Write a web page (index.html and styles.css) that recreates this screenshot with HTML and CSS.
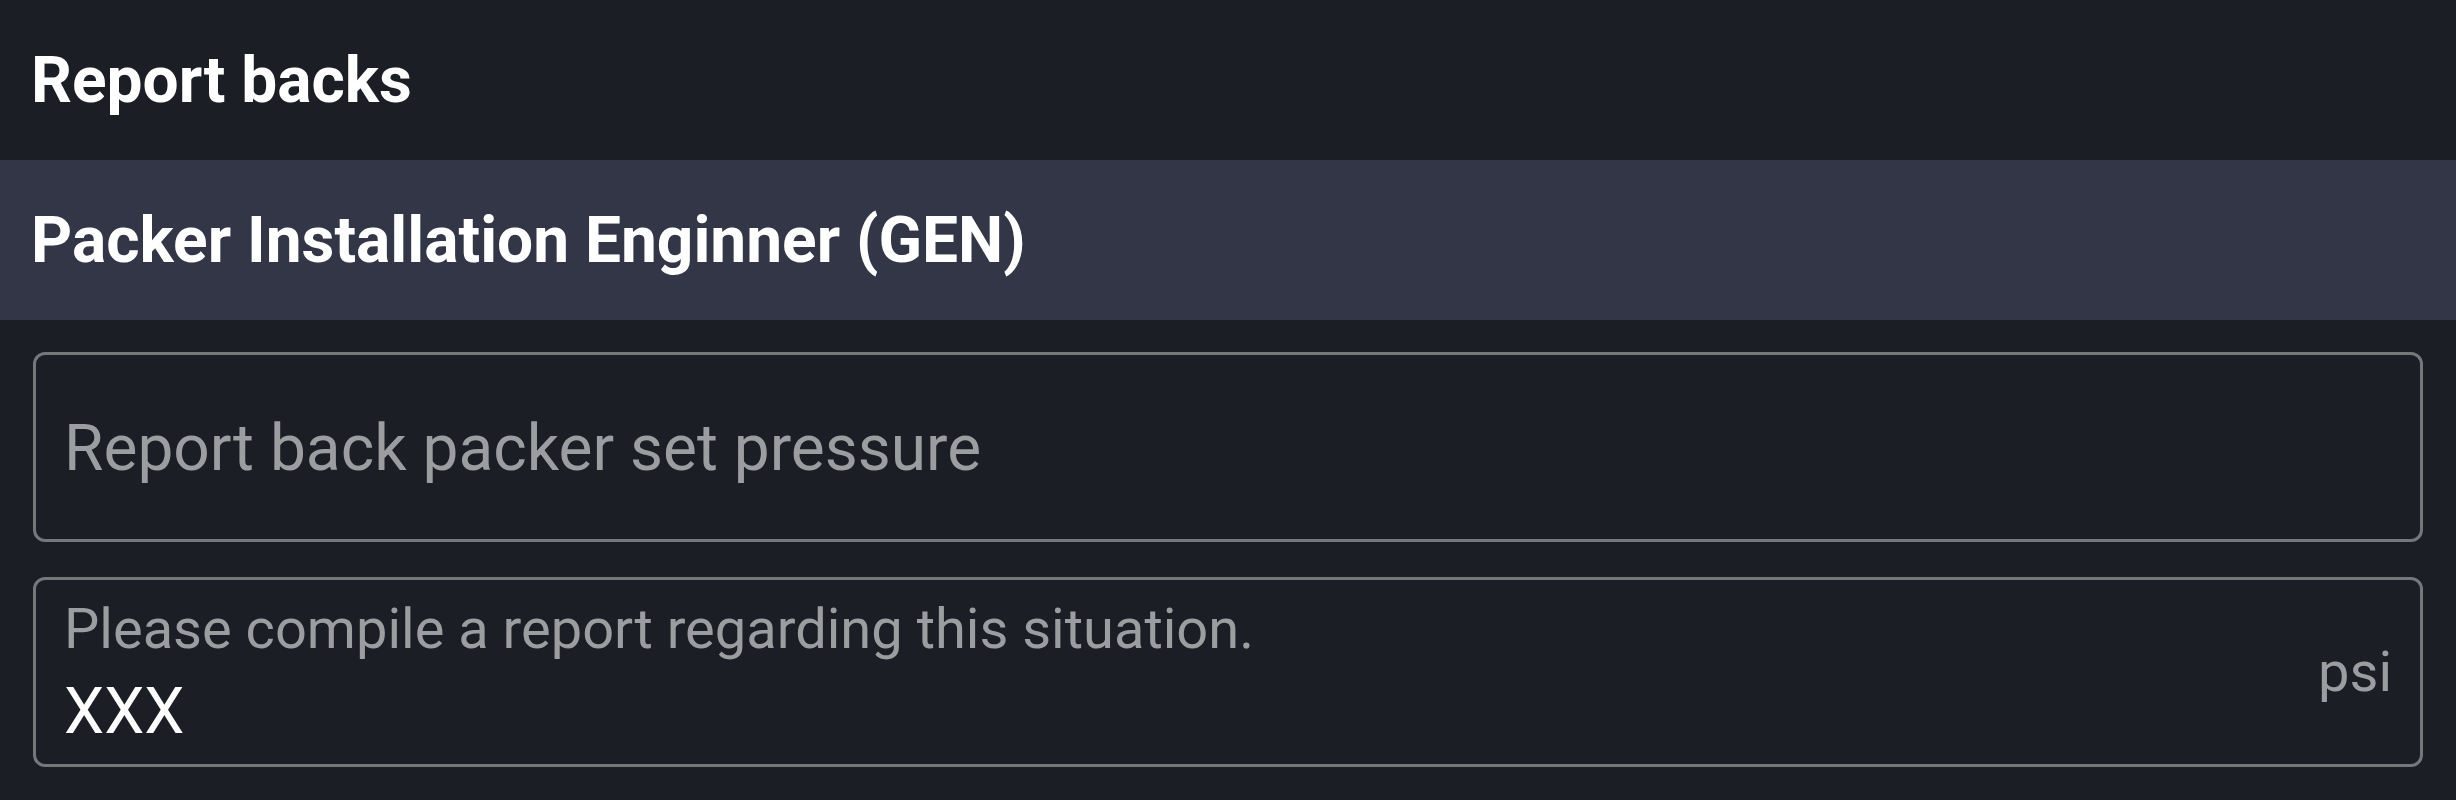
FILE: index.html
```html
<!DOCTYPE html>
<html lang="en">
<head>
<meta charset="utf-8">
<title>Report backs</title>
<link rel="stylesheet" href="styles.css">
</head>
<body>
  <div class="page">
    <header class="title-bar">
      <h1 class="title">Report backs</h1>
    </header>
    <section class="section">
      <div class="section-head">
        <h2 class="section-title">Packer Installation Enginner (GEN)</h2>
      </div>
      <div class="fields">
        <div class="field field-empty">
          <span class="placeholder">Report back packer set pressure</span>
        </div>
        <div class="field field-filled">
          <div class="field-main">
            <span class="field-label">Please compile a report regarding this situation.</span>
            <span class="field-value">XXX</span>
          </div>
          <span class="field-unit">psi</span>
        </div>
      </div>
    </section>
  </div>
</body>
</html>
```

FILE: styles.css
```css
* {
  box-sizing: border-box;
}

html, body {
  margin: 0;
  padding: 0;
  background: #1b1e25;
}

body {
  font-family: Roboto, "Noto Sans", "Liberation Sans", sans-serif;
  color: #ffffff;
  width: 2456px;
  height: 800px;
  overflow: hidden;
}

.page {
  display: flex;
  flex-direction: column;
}

.title-bar {
  height: 160px;
  display: flex;
  align-items: center;
  padding: 0 31px;
  background: #1b1e25;
}

.title,
.section-title {
  margin: 0;
  font-size: 64px;
  font-weight: 700;
  line-height: 75px;
  color: #ffffff;
}

.section-head {
  height: 160px;
  display: flex;
  align-items: center;
  padding: 0 31px;
  background: #323646;
}

.fields {
  display: flex;
  flex-direction: column;
  gap: 35px;
  padding: 32px 33px 0 33px;
}

.field {
  border: 3px solid #76777b;
  border-radius: 12px;
  height: 190px;
  display: flex;
  align-items: center;
  padding: 0 28px;
}

.field-empty {
  padding-top: 2px;
}

.placeholder {
  font-size: 64px;
  line-height: 75px;
  color: #9c9da1;
}

.field-filled {
  align-items: stretch;
}

.field-main {
  flex: 1;
  display: flex;
  flex-direction: column;
  justify-content: center;
  gap: 12px;
}

.field-label {
  font-size: 56px;
  line-height: 66px;
  color: #9c9da1;
}

.field-value {
  font-size: 64px;
  line-height: 75px;
  color: #ffffff;
}

.field-unit {
  align-self: center;
  font-size: 56px;
  line-height: 66px;
  color: #9c9da1;
}
```
